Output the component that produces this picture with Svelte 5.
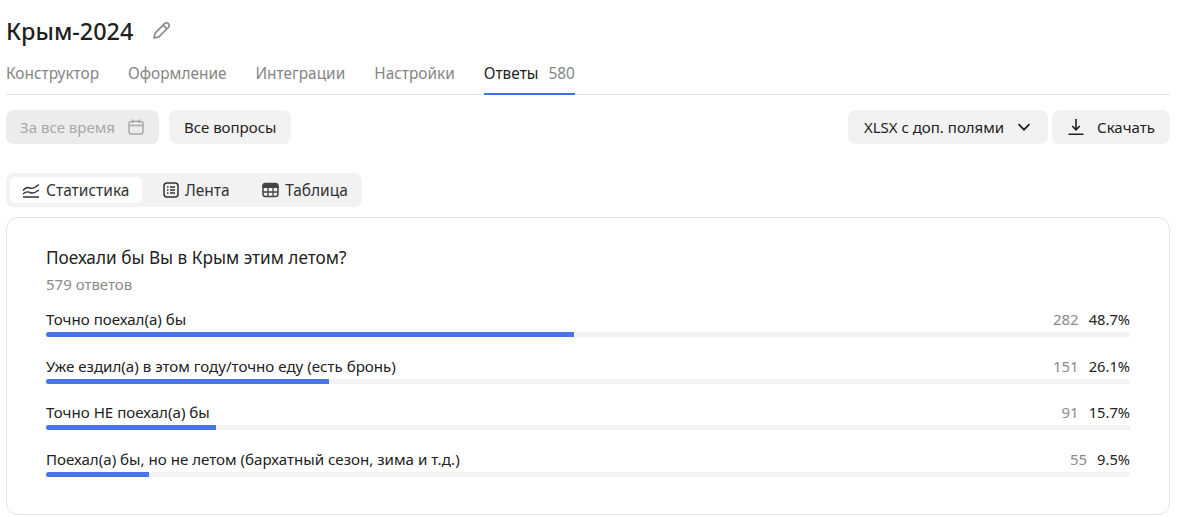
<script>
  const tabs = [
    { label: 'Конструктор' },
    { label: 'Оформление' },
    { label: 'Интеграции' },
    { label: 'Настройки' },
    { label: 'Ответы', count: 580, active: true }
  ];

  const rows = [
    { label: 'Точно поехал(а) бы', count: 282, pct: 48.7 },
    { label: 'Уже ездил(а) в этом году/точно еду (есть бронь)', count: 151, pct: 26.1 },
    { label: 'Точно НЕ поехал(а) бы', count: 91, pct: 15.7 },
    { label: 'Поехал(а) бы, но не летом (бархатный сезон, зима и т.д.)', count: 55, pct: 9.5 }
  ];
</script>

<div class="page">
  <header class="title-row">
    <h1>Крым-2024</h1>
    <svg class="pencil" width="20" height="20" viewBox="0 0 18 18" fill="none" stroke="#8a8a8a" stroke-width="1.5" stroke-linejoin="round">
      <path d="M1.800 16.200l1-4.400 8.700-8.700a2.100 2.100 0 0 1 3 0l.4.400a2.100 2.100 0 0 1 0 3l-8.700 8.700z" />
      <path d="M10 4.600l3.400 3.400" />
    </svg>
  </header>

  <nav class="tabs">
    {#each tabs as tab}
      <div class="tab" class:active={tab.active}>
        {tab.label}
        {#if tab.count}<span class="tab-count">{tab.count}</span>{/if}
      </div>
    {/each}
  </nav>

  <div class="toolbar">
    <button class="btn disabled">
      За все время
      <svg width="18" height="18" viewBox="0 0 18 18" fill="none" stroke="#a8a8a8" stroke-width="1.5">
        <rect x="2" y="3.500" width="14" height="12.500" rx="2.500" />
        <path d="M2 7.500h14M5.800 1.500v3.500M12.200 1.500v3.500" />
      </svg>
    </button>
    <button class="btn">Все вопросы</button>
    <div class="spacer"></div>
    <button class="btn format">
      XLSX с доп. полями
      <svg width="16" height="16" viewBox="0 0 16 16" fill="none" stroke="#222" stroke-width="1.7">
        <path d="M2.500 5.200L8 10.700l5.500-5.500" />
      </svg>
    </button>
    <button class="btn download">
      <svg width="18" height="18" viewBox="0 0 18 18" fill="none" stroke="#222" stroke-width="1.6">
        <path d="M9 1v10.500M5.200 8L9 11.800 12.800 8M1.500 16.200h15" />
      </svg>
      Скачать
    </button>
  </div>

  <div class="segments">
    <div class="segment active">
      <svg width="18" height="16" viewBox="0 0 18 16" fill="none" stroke="#333" stroke-width="1.400">
        <path d="M1 8.500c3-4 5-3.500 7-2.500s4 .5 9-3.500M1 12c3-3 5-2.500 7-1.500s5 .5 9-2.500M1 15h16" />
      </svg>
      Статистика
    </div>
    <div class="segment">
      <svg width="16" height="16" viewBox="0 0 16 16" fill="none" stroke="#333" stroke-width="1.500">
        <rect x="1" y="1" width="14" height="14" rx="3" />
        <path d="M4 5h1.500M4 8h1.500M4 11h1.500M7 5h5M7 8h5M7 11h5" />
      </svg>
      Лента
    </div>
    <div class="segment">
      <svg width="17" height="16" viewBox="0 0 17 16" fill="none">
        <path d="M3.500 1.500h10a2.500 2.500 0 0 1 2.500 2.500v1.500h-15v-1.500a2.500 2.500 0 0 1 2.500-2.500z" fill="#444" stroke="#444" />
        <rect x="1" y="1.500" width="15" height="13" rx="2.500" stroke="#444" stroke-width="1.500" />
        <path d="M1 10h15M6 6v8.500M11 6v8.500" stroke="#444" stroke-width="1.300" />
      </svg>
      Таблица
    </div>
  </div>

  <section class="card">
    <h2>Поехали бы Вы в Крым этим летом?</h2>
    <div class="total">579 ответов</div>
    <div class="rows">
      {#each rows as row}
        <div class="row">
          <div class="row-head">
            <span class="row-label">{row.label}</span>
            <span class="row-count">{row.count}</span>
            <span class="row-pct">{row.pct}%</span>
          </div>
          <div class="track">
            <div class="fill" style="width: {row.pct}%"></div>
          </div>
        </div>
      {/each}
    </div>
  </section>
</div>

<style>
  :global(body) {
    background: #fff;
  }

  .page {
    width: 1164px;
    height: 517px;
    padding: 0 30px 0 6px;
    box-sizing: content-box;
    font-family: "Noto Sans", sans-serif;
    color: #222;
    overflow: hidden;
  }

  .title-row {
    display: flex;
    align-items: center;
    gap: 19px;
    height: 61px;
  }

  h1 {
    margin: 0;
    font-size: 23.400px;
    font-weight: 500;
    color: #1f1f1f;
  }

  .pencil {
    margin-top: -1px;
  }

  .tabs {
    display: flex;
    gap: 29px;
    height: 33px;
    border-bottom: 1px solid #e5e5e5;
  }

  .tab {
    box-sizing: border-box;
    height: 34px;
    padding-top: 2px;
    font-size: 15.400px;
    line-height: 22px;
    color: #858585;
  }

  .tab.active {
    color: #222;
    border-bottom: 2px solid #3f72ee;
  }

  .tab-count {
    margin-left: 6px;
    color: #858585;
  }

  .toolbar {
    display: flex;
    gap: 10px;
    margin-top: 15px;
  }

  .spacer {
    flex: 1;
  }

  .btn {
    display: inline-flex;
    align-items: center;
    justify-content: center;
    gap: 11px;
    height: 34px;
    padding: 0 15px;
    border: 0;
    border-radius: 8px;
    background: #f2f2f2;
    font: inherit;
    font-size: 15px;
    color: #222;
  }

  .btn.disabled {
    width: 153px;
    padding: 0;
    gap: 12px;
    background: #ececec;
    color: #a8a8a8;
  }

  .btn.format {
    width: 200px;
    padding: 0;
    gap: 12px;
    margin-right: -6px;
  }

  .btn.download {
    width: 118px;
    padding: 0;
    gap: 12px;
  }

  .segments {
    display: inline-flex;
    gap: 8.500px;
    margin-top: 29px;
    padding: 4px 2px 4px 4px;
    border-radius: 8px;
    background: #f2f2f2;
    vertical-align: top;
  }

  .segment {
    display: flex;
    align-items: center;
    gap: 6px;
    height: 26px;
    padding: 0 12px;
    border-radius: 5px;
    font-size: 15.500px;
    color: #333;
  }

  .segment.active {
    padding-right: 13px;
    background: #fff;
  }

  .card {
    box-sizing: border-box;
    height: 298px;
    margin-top: 10px;
    padding: 27px 39px 0;
    border: 1px solid #e3e3e3;
    border-radius: 12px;
  }

  h2 {
    margin: 0;
    font-size: 17.200px;
    line-height: 26px;
    font-weight: 400;
    color: #222;
  }

  .total {
    margin-top: 2px;
    font-size: 15px;
    line-height: 22px;
    color: #8a8a8a;
  }

  .rows {
    display: flex;
    flex-direction: column;
    gap: 17.500px;
    margin-top: 13px;
  }

  .row-head {
    display: flex;
    align-items: center;
    gap: 10px;
    height: 22px;
    font-size: 15.100px;
  }

  .row-label {
    flex: 1;
  }

  .row-count {
    font-size: 15px;
    color: #8a8a8a;
  }

  .row-pct {
    font-size: 14.700px;
    color: #222;
  }

  .track {
    height: 5px;
    margin-top: 2px;
    border-radius: 3px;
    background: #f2f2f2;
    overflow: hidden;
  }

  .fill {
    height: 100%;
    background: #4a74e8;
  }
</style>
